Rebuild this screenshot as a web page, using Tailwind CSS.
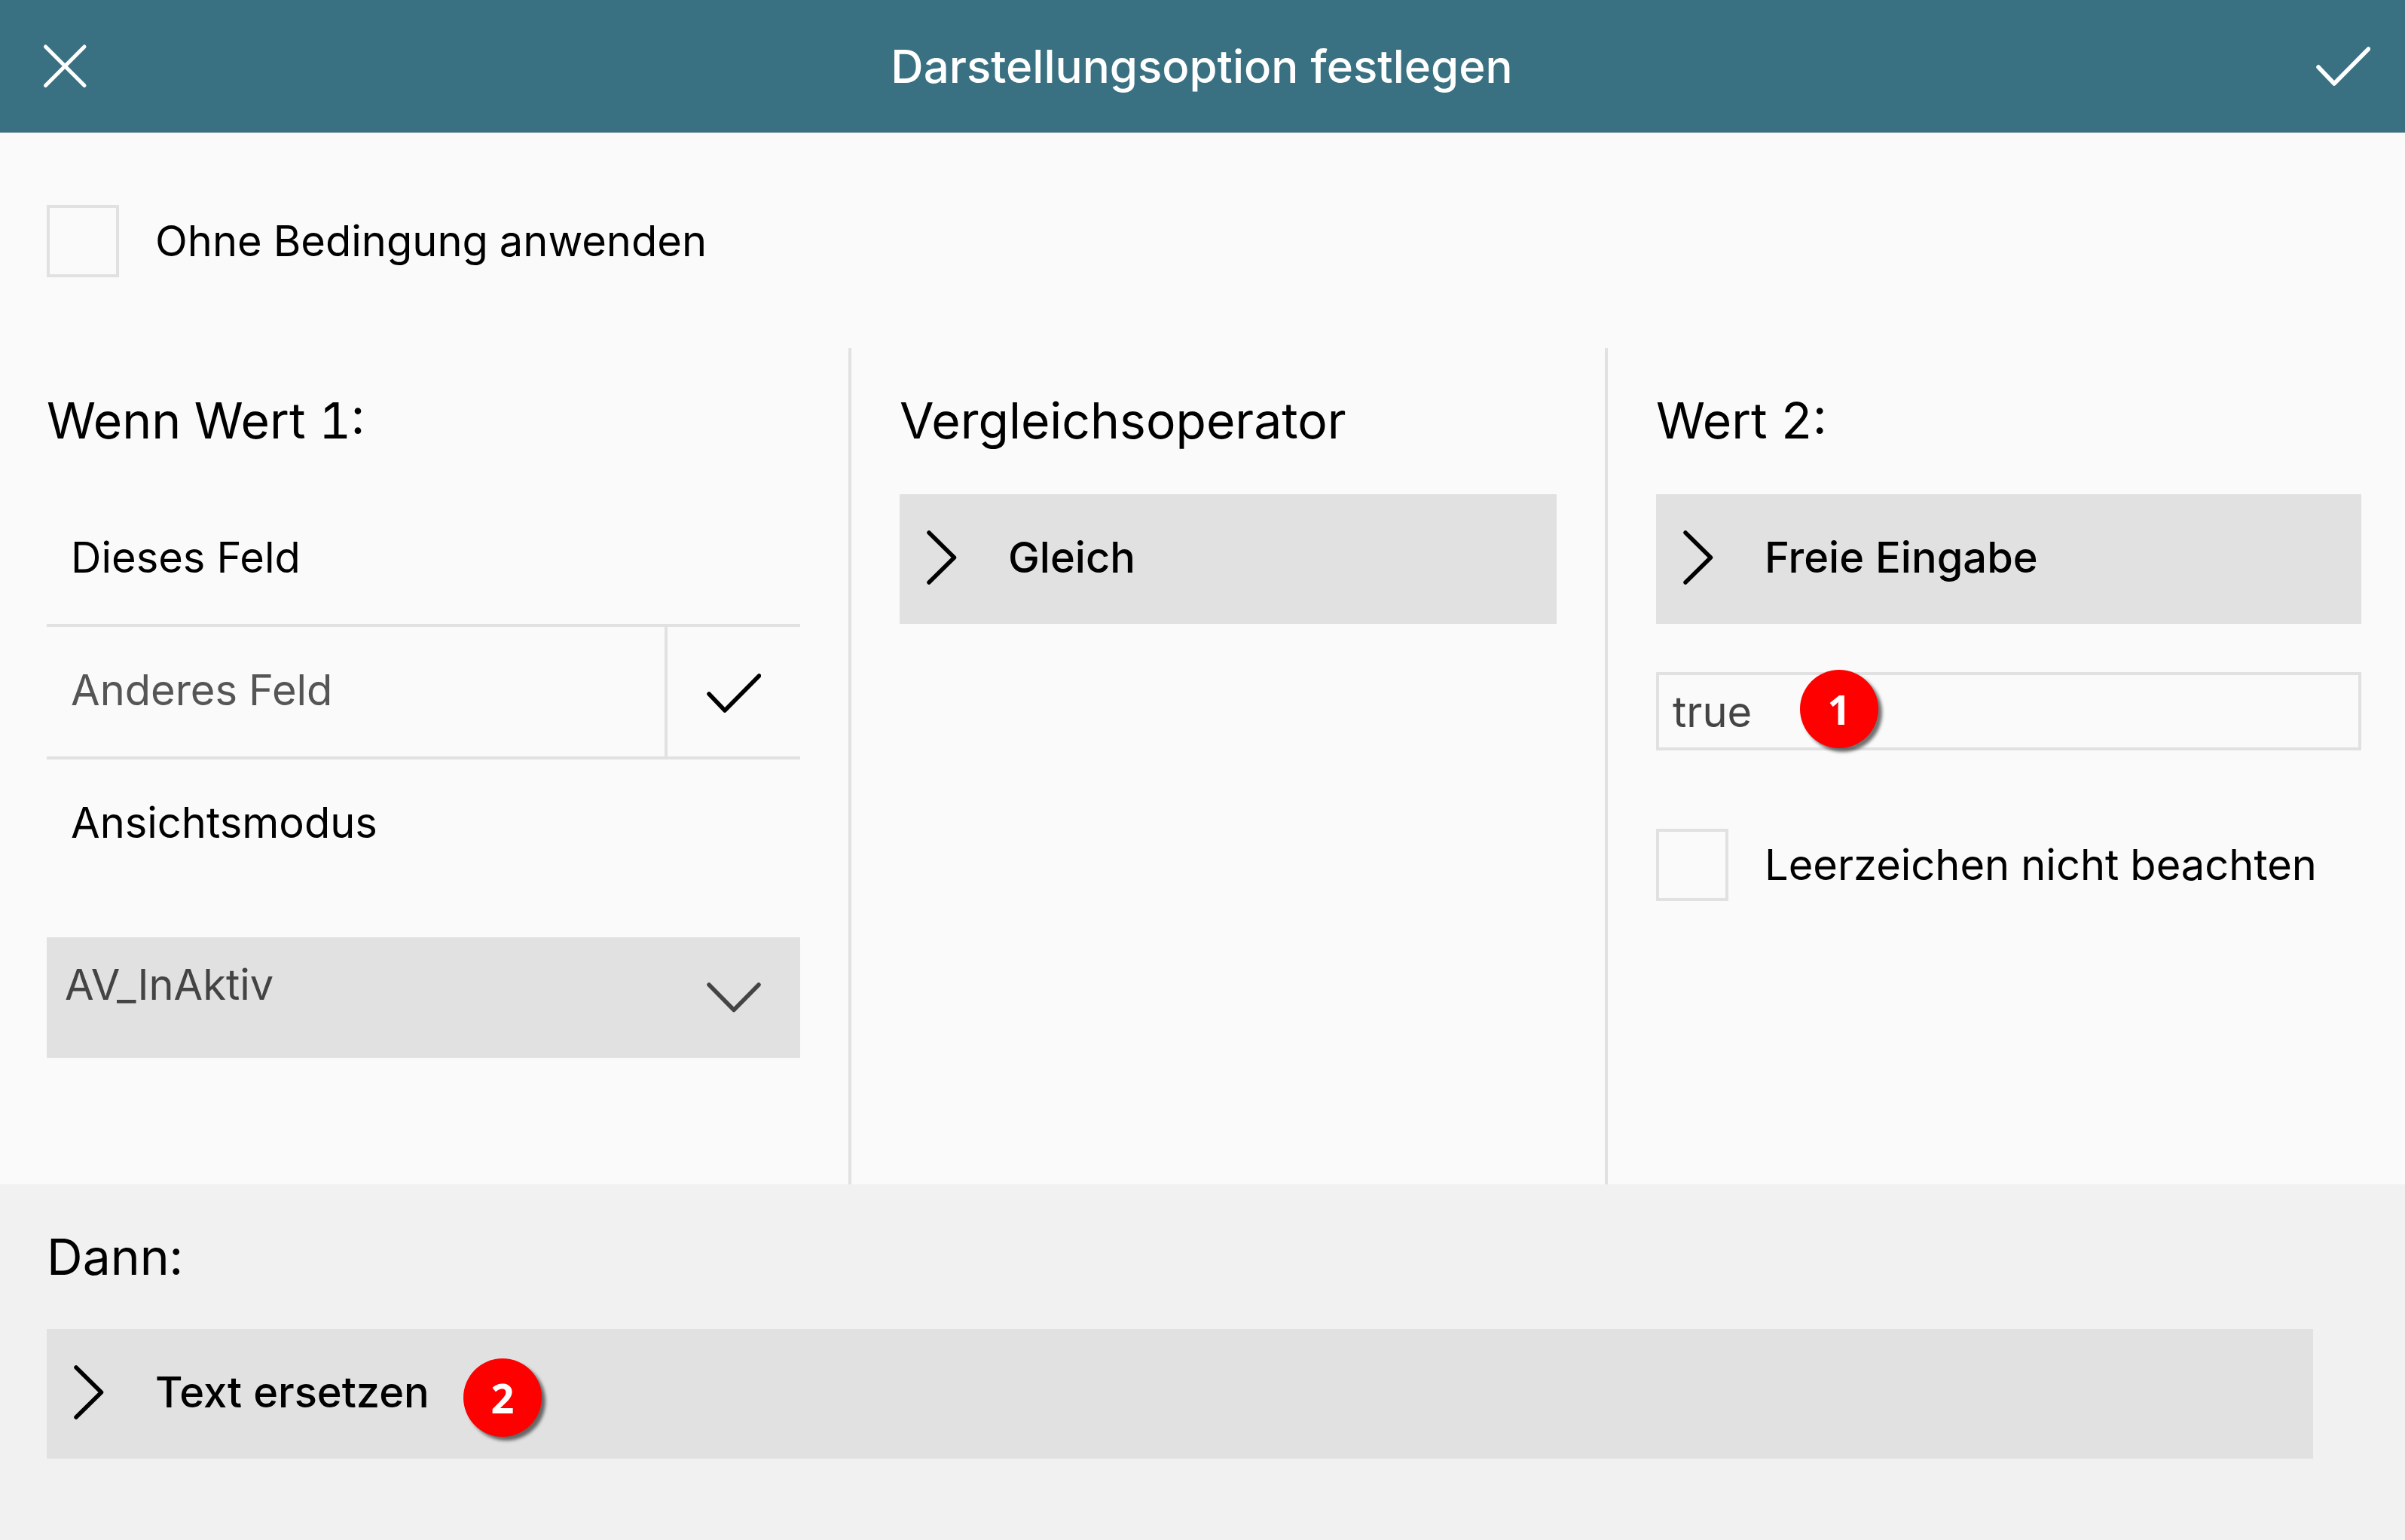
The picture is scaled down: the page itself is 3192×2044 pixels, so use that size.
<!DOCTYPE html>
<html lang="de">
<head>
<meta charset="utf-8">
<meta name="viewport" content="width=device-width, initial-scale=1">
<title>Darstellungsoption festlegen</title>
<script src="https://cdn.jsdelivr.net/npm/@tailwindcss/browser@4"></script>
</head>
<body class="flex min-h-screen flex-col bg-[#fafafa] font-['Inter',sans-serif] text-[56px] leading-[72px] tabular-nums text-black">

<header class="flex h-44 items-center justify-between bg-[#3a7182] pl-14 pr-[46px] text-white">
  <button type="button" aria-label="Schließen">
    <svg class="h-15 w-15" viewBox="0 0 60 60" fill="none" stroke="currentColor" stroke-width="5" stroke-linecap="round"><path d="M4.500 4 56 55.500M56 4 4.500 55.500"/></svg>
  </button>
  <h1 class="text-[60px] font-medium">Darstellungsoption festlegen</h1>
  <button type="button" aria-label="Übernehmen">
    <svg class="h-13 w-18" viewBox="0 0 72 52" fill="none" stroke="currentColor" stroke-width="5.500" stroke-linecap="round" stroke-linejoin="round"><path d="M3 27 24 49 69.500 3"/></svg>
  </button>
</header>

<main>
  <div class="px-[62px] pb-[94px] pt-24">
    <label class="flex items-center gap-12">
      <input type="checkbox" class="h-24 w-24 shrink-0 appearance-none border-4 border-[#e1e1e1]">
      <span>Ohne Bedingung anwenden</span>
    </label>
  </div>

  <div class="grid grid-cols-[1130fr_1004fr_1058fr]">
    <section class="border-r-4 border-[#e1e1e1] pb-[168px] pl-[62px] pr-16 pt-16">
      <h2 class="mb-[66px] text-[66px] leading-16">Wenn Wert 1:</h2>
      <ul class="mb-16">
        <li><button type="button" class="flex h-43 w-full items-center px-8 pb-1">Dieses Feld</button></li>
        <li class="flex h-45 border-y-4 border-[#e1e1e1]">
          <button type="button" class="flex flex-1 items-center px-8 pb-1 text-[#555555]">Anderes Feld</button>
          <span class="flex w-45 items-center justify-center border-l-4 border-[#e1e1e1] pt-1">
            <svg class="h-13 w-18" viewBox="0 0 72 52" fill="none" stroke="currentColor" stroke-width="5.500" stroke-linecap="round" stroke-linejoin="round" aria-hidden="true"><path d="M3 27 24 49 69.500 3"/></svg>
          </span>
        </li>
        <li><button type="button" class="flex h-43 w-full items-center px-8 pb-1">Ansichtsmodus</button></li>
      </ul>
      <div class="relative">
        <select aria-label="Feld" class="block h-40 w-full appearance-none rounded-none bg-[#e1e1e1] pb-[34px] pl-6 pr-32 text-[#444444]">
          <option>AV_InAktiv</option>
        </select>
        <svg class="pointer-events-none absolute inset-y-0 right-13 my-auto h-10 w-18 text-[#444444]" viewBox="0 0 72 40" fill="none" stroke="currentColor" stroke-width="5.500" stroke-linecap="round" stroke-linejoin="round" aria-hidden="true"><path d="M3 3 36 36.500 69 3"/></svg>
      </div>
    </section>

    <section class="border-r-4 border-[#e1e1e1] px-16 pt-16">
      <h2 class="mb-[66px] text-[66px] leading-16">Vergleichsoperator</h2>
      <button type="button" class="flex h-43 w-full items-center gap-17 bg-[#e1e1e1] pb-1 pl-9 font-medium">
        <svg class="h-18 w-10" viewBox="0 0 40 72" fill="none" stroke="currentColor" stroke-width="5.500" stroke-linecap="round" stroke-linejoin="round" aria-hidden="true"><path d="M3 3 36.500 36 3 69"/></svg>
        Gleich
      </button>
    </section>

    <section class="pl-16 pr-[58px] pt-16">
      <h2 class="mb-[66px] text-[66px] leading-16">Wert 2:</h2>
      <button type="button" class="flex h-43 w-full items-center gap-17 bg-[#e1e1e1] pb-1 pl-9 font-medium">
        <svg class="h-18 w-10" viewBox="0 0 40 72" fill="none" stroke="currentColor" stroke-width="5.500" stroke-linecap="round" stroke-linejoin="round" aria-hidden="true"><path d="M3 3 36.500 36 3 69"/></svg>
        Freie Eingabe
      </button>
      <div class="relative mt-16">
        <input type="text" aria-label="Wert" value="true" class="block h-26 w-full border-4 border-[#e1e1e1] px-[18px] pt-[2px] text-[#444444]">
        <span class="absolute -top-[3px] left-[191px] flex h-26 w-26 items-center justify-center rounded-full bg-[#ff0000] font-['Open_Sans',sans-serif] text-[54px] font-bold text-white shadow-[5px_5px_4px_rgba(0,0,0,0.55)]">1</span>
      </div>
      <label class="mt-26 flex items-center gap-12">
        <input type="checkbox" class="h-24 w-24 shrink-0 appearance-none border-4 border-[#e1e1e1]">
        <span class="whitespace-nowrap">Leerzeichen nicht beachten</span>
      </label>
    </section>
  </div>
</main>

<footer class="flex-1 bg-[#f1f1f1] pb-24 pl-[62px] pr-[122px] pt-16">
  <h2 class="mb-16 text-[66px] leading-16">Dann:</h2>
  <div class="relative">
    <button type="button" class="flex h-43 w-full items-center gap-17 bg-[#e1e1e1] pb-1 pl-9 font-medium">
      <svg class="h-18 w-10" viewBox="0 0 40 72" fill="none" stroke="currentColor" stroke-width="5.500" stroke-linecap="round" stroke-linejoin="round" aria-hidden="true"><path d="M3 3 36.500 36 3 69"/></svg>
      Text ersetzen
    </button>
    <span class="absolute left-[553px] top-[39px] flex h-26 w-26 items-center justify-center rounded-full bg-[#ff0000] font-['Open_Sans',sans-serif] text-[54px] font-bold text-white shadow-[5px_5px_4px_rgba(0,0,0,0.55)]">2</span>
  </div>
</footer>

</body>
</html>
